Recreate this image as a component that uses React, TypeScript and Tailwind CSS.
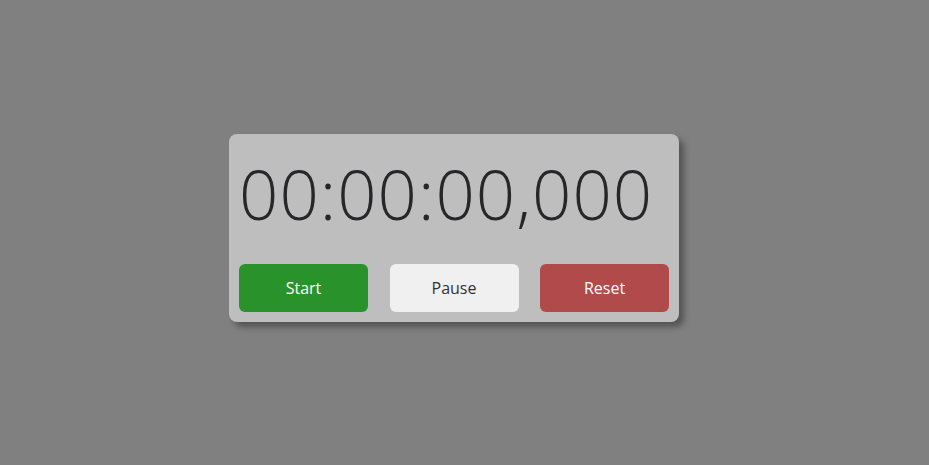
import React from "react";

export default function App() {
  return (
    <div className="min-h-screen w-full bg-[#808080] flex items-center justify-center pr-[21px] pb-[9px] font-['Open_Sans',sans-serif]">
      <div className="w-[450px] h-[188px] bg-[#bebebe] rounded-lg shadow-[5px_5px_6px_rgba(0,0,0,0.35)] flex flex-col px-[10px] pb-[10px]">
        <div className="flex-1 flex items-center pb-[12px] text-[69px] font-light leading-none text-[#27272a] tracking-[1px]">
          00:00:00,000
        </div>
        <div className="flex justify-between">
          <button className="w-[129px] h-[48px] rounded-md bg-[#2a922a] text-white text-[16px]">
            Start
          </button>
          <button className="w-[129px] h-[48px] rounded-md bg-[#f0f0f0] text-[#333] text-[16px]">
            Pause
          </button>
          <button className="w-[129px] h-[48px] rounded-md bg-[#b14a4a] text-white text-[16px]">
            Reset
          </button>
        </div>
      </div>
    </div>
  );
}
